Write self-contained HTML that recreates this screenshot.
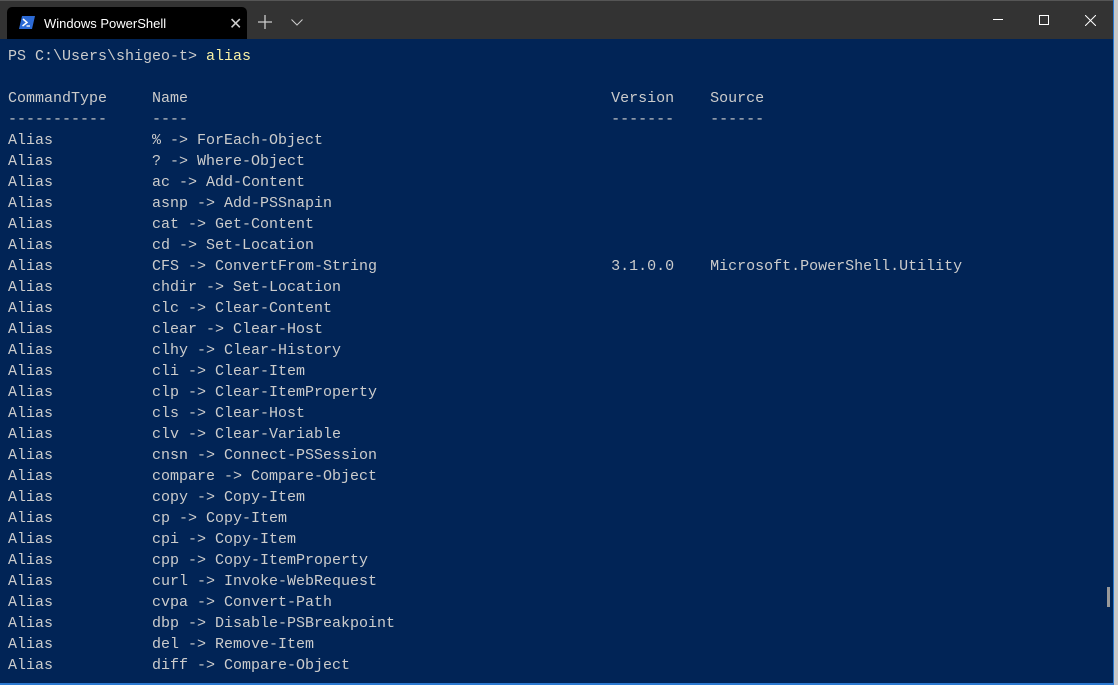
<!DOCTYPE html>
<html><head><meta charset="utf-8"><style>
html,body{margin:0;padding:0;width:1118px;height:685px;overflow:hidden;background:#d8d8d8;}
.win{position:absolute;left:0;top:0;width:1113px;height:683px;background:#012456;border-right:1px solid #2b79d0;border-bottom:2px solid #2b79d0;}
.title{position:absolute;left:0;top:0;width:1113px;height:38px;background:#333;border-top:1px solid #555;}
.tab{position:absolute;left:7px;top:6px;width:240px;height:32px;background:#000;border-radius:5px 5px 0 0;color:#fff;font:13px "Liberation Sans",sans-serif;}
.tab .t{position:absolute;left:37px;top:9px;}
.tab .x{position:absolute;left:222px;top:7px;font-size:16px;color:#ccc;}
pre{position:absolute;left:8px;top:46px;margin:0;font:15px/21px "Liberation Mono",monospace;color:#cccccc;}
.y{color:#f9f1a5;}
.strip{position:absolute;left:1114px;top:0;width:4px;height:685px;background:#c8c8c8;}
</style></head><body>
<div class="strip"></div>
<div class="win">
<div class="title">
<div class="tab">
<svg style="position:absolute;left:12px;top:9px" width="16" height="13" viewBox="0 0 16 13"><path d="M3 0H16L13 13H0Z" fill="#2c6ad6"/><path d="M4 3L8 6.5L3.5 10" stroke="#fff" stroke-width="1.5" fill="none"/><path d="M7.5 10H11" stroke="#fff" stroke-width="1.3"/></svg>
<span class="t">Windows PowerShell</span><span class="x">✕</span></div>
<svg style="position:absolute;left:258px;top:14px" width="14" height="14"><path d="M7 0V14M0 7H14" stroke="#ccc" stroke-width="1.3"/></svg>
<svg style="position:absolute;left:291px;top:18px" width="12" height="7"><path d="M0.5 0.5L6 6L11.5 0.5" stroke="#ccc" fill="none"/></svg>
<svg style="position:absolute;left:993px;top:18px" width="10" height="2"><path d="M0 0.5H10" stroke="#fff"/></svg>
<svg style="position:absolute;left:1039px;top:14px" width="10" height="10"><rect x="0.5" y="0.5" width="9" height="9" stroke="#fff" fill="none"/></svg>
<svg style="position:absolute;left:1085px;top:14px" width="11" height="11"><path d="M0 0L11 11M11 0L0 11" stroke="#fff"/></svg>
</div>
<pre>PS C:\Users\shigeo-t&gt; <span class="y">alias</span>

CommandType     Name                                               Version    Source
-----------     ----                                               -------    ------
Alias           % -&gt; ForEach-Object
Alias           ? -&gt; Where-Object
Alias           ac -&gt; Add-Content
Alias           asnp -&gt; Add-PSSnapin
Alias           cat -&gt; Get-Content
Alias           cd -&gt; Set-Location
Alias           CFS -&gt; ConvertFrom-String                          3.1.0.0    Microsoft.PowerShell.Utility
Alias           chdir -&gt; Set-Location
Alias           clc -&gt; Clear-Content
Alias           clear -&gt; Clear-Host
Alias           clhy -&gt; Clear-History
Alias           cli -&gt; Clear-Item
Alias           clp -&gt; Clear-ItemProperty
Alias           cls -&gt; Clear-Host
Alias           clv -&gt; Clear-Variable
Alias           cnsn -&gt; Connect-PSSession
Alias           compare -&gt; Compare-Object
Alias           copy -&gt; Copy-Item
Alias           cp -&gt; Copy-Item
Alias           cpi -&gt; Copy-Item
Alias           cpp -&gt; Copy-ItemProperty
Alias           curl -&gt; Invoke-WebRequest
Alias           cvpa -&gt; Convert-Path
Alias           dbp -&gt; Disable-PSBreakpoint
Alias           del -&gt; Remove-Item
Alias           diff -&gt; Compare-Object</pre>
<div style="position:absolute;left:1107px;top:587px;width:3px;height:20px;background:#999"></div>
</div>
</body></html>
